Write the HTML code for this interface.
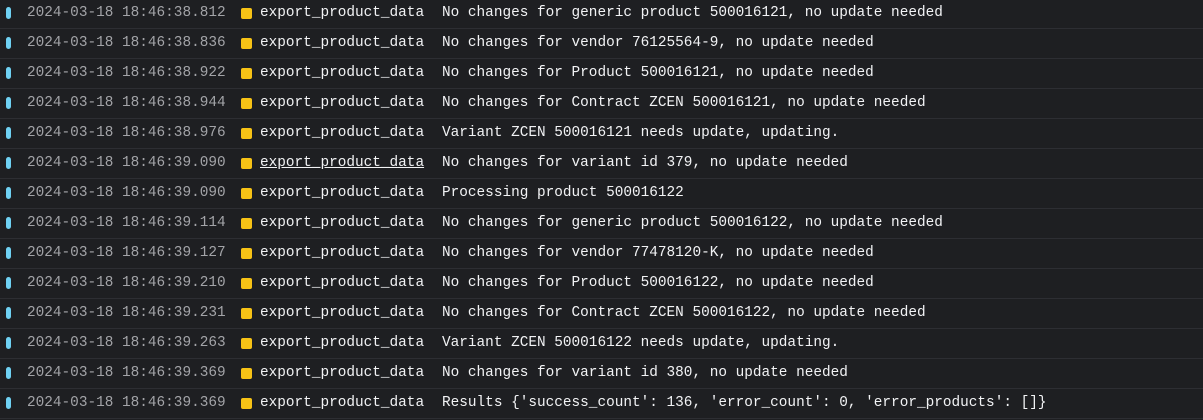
<!DOCTYPE html>
<html><head><style>
body{margin:0;background:#1e1f22;width:1203px;height:420px;overflow:hidden;font-family:"Liberation Mono",monospace;font-size:14.4px;}
.r{position:relative;height:29px;border-bottom:1px solid #2d2e33;}
.wrap{position:absolute;top:-1px;left:0;right:0}
.i{position:absolute;left:6px;top:8px;width:5px;height:12px;border-radius:3px;background:#6fd1f3}
.t{position:absolute;left:27px;top:6px;color:#a3a4a8;white-space:pre}
.s{position:absolute;left:241px;top:9px;width:11px;height:11px;border-radius:2px;background:#f7c316}
.n{position:absolute;left:260px;top:6px;color:#f2f3f5;white-space:pre}
.m{position:absolute;left:442px;top:6px;color:#f2f3f5;white-space:pre;letter-spacing:0px}
u{text-decoration:underline}
</style></head><body><div class="wrap">
<div class="r"><i class="i"></i><span class="t">2024-03-18 18:46:38.812</span><i class="s"></i><span class="n">export_product_data</span><span class="m">No changes for generic product 500016121, no update needed</span></div>
<div class="r"><i class="i"></i><span class="t">2024-03-18 18:46:38.836</span><i class="s"></i><span class="n">export_product_data</span><span class="m">No changes for vendor 76125564-9, no update needed</span></div>
<div class="r"><i class="i"></i><span class="t">2024-03-18 18:46:38.922</span><i class="s"></i><span class="n">export_product_data</span><span class="m">No changes for Product 500016121, no update needed</span></div>
<div class="r"><i class="i"></i><span class="t">2024-03-18 18:46:38.944</span><i class="s"></i><span class="n">export_product_data</span><span class="m">No changes for Contract ZCEN 500016121, no update needed</span></div>
<div class="r"><i class="i"></i><span class="t">2024-03-18 18:46:38.976</span><i class="s"></i><span class="n">export_product_data</span><span class="m">Variant ZCEN 500016121 needs update, updating.</span></div>
<div class="r"><i class="i"></i><span class="t">2024-03-18 18:46:39.090</span><i class="s"></i><span class="n"><u>export_product_data</u></span><span class="m">No changes for variant id 379, no update needed</span></div>
<div class="r"><i class="i"></i><span class="t">2024-03-18 18:46:39.090</span><i class="s"></i><span class="n">export_product_data</span><span class="m">Processing product 500016122</span></div>
<div class="r"><i class="i"></i><span class="t">2024-03-18 18:46:39.114</span><i class="s"></i><span class="n">export_product_data</span><span class="m">No changes for generic product 500016122, no update needed</span></div>
<div class="r"><i class="i"></i><span class="t">2024-03-18 18:46:39.127</span><i class="s"></i><span class="n">export_product_data</span><span class="m">No changes for vendor 77478120-K, no update needed</span></div>
<div class="r"><i class="i"></i><span class="t">2024-03-18 18:46:39.210</span><i class="s"></i><span class="n">export_product_data</span><span class="m">No changes for Product 500016122, no update needed</span></div>
<div class="r"><i class="i"></i><span class="t">2024-03-18 18:46:39.231</span><i class="s"></i><span class="n">export_product_data</span><span class="m">No changes for Contract ZCEN 500016122, no update needed</span></div>
<div class="r"><i class="i"></i><span class="t">2024-03-18 18:46:39.263</span><i class="s"></i><span class="n">export_product_data</span><span class="m">Variant ZCEN 500016122 needs update, updating.</span></div>
<div class="r"><i class="i"></i><span class="t">2024-03-18 18:46:39.369</span><i class="s"></i><span class="n">export_product_data</span><span class="m">No changes for variant id 380, no update needed</span></div>
<div class="r"><i class="i"></i><span class="t">2024-03-18 18:46:39.369</span><i class="s"></i><span class="n">export_product_data</span><span class="m">Results {'success_count': 136, 'error_count': 0, 'error_products': []}</span></div>
</div></body></html>
